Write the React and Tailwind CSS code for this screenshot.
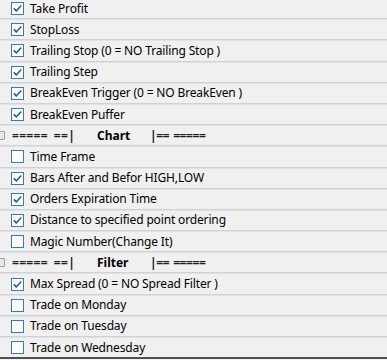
import React from "react";

const items = [
  { t: "Take Profit", c: true },
  { t: "StopLoss", c: true },
  { t: "Trailing Stop (0 = NO Trailing Stop )", c: true },
  { t: "Trailing Step", c: true },
  { t: "BreakEven Trigger (0 = NO BreakEven )", c: true },
  { t: "BreakEven Puffer", c: true },
  { h: "Chart" },
  { t: "Time Frame", c: false },
  { t: "Bars After and Befor HIGH,LOW", c: true },
  { t: "Orders Expiration Time", c: true },
  { t: "Distance to specified point ordering", c: true },
  { t: "Magic Number(Change It)", c: false },
  { h: "Filter" },
  { t: "Max Spread (0 = NO Spread Filter )", c: true },
  { t: "Trade on Monday", c: false },
  { t: "Trade on Tuesday", c: false },
  { t: "Trade on Wednesday", c: false },
];

function Box({ checked }) {
  return (
    <div className="w-[13px] h-[13px] border border-[#3b79b3] bg-white flex items-center justify-center shrink-0">
      {checked && (
        <svg width="11" height="11" viewBox="0 0 11 11">
          <path d="M1.8 5.4 L4.3 7.9 L9.2 2.6" fill="none" stroke="#1b5790" strokeWidth="1.5" />
        </svg>
      )}
    </div>
  );
}

function Row({ it }) {
  return (
    <div className="h-[21.2px] flex flex-col shrink-0">
      <div className="flex-1 flex items-center relative">
        {it.h ? (
          <>
            <div className="absolute left-[-4px] top-[5px] w-[9px] h-[9px] border border-[#a0a0a0] bg-[#e8e8e8] rounded-[1px]" />
            <div className="ml-[12px] w-[85px] flex font-bold text-[#202020] tracking-[0.3px]">
              <span>=====</span>
              <span className="ml-[6px]">==|</span>
            </div>
            <span className="w-[53px] font-bold">{it.h}</span>
            <div className="flex font-bold text-[#202020] tracking-[-0.4px]">
              <span>|==</span>
              <span className="ml-[4px]">=====</span>
            </div>
          </>
        ) : (
          <>
            <div className="ml-[11px]">
              <Box checked={it.c} />
            </div>
            <span className="ml-[6px] whitespace-nowrap tracking-[-0.15px]">{it.t}</span>
          </>
        )}
      </div>
      <div className="h-px bg-[#d2d2d2]" />
      <div className="h-[1px] bg-[#e2e2e2]" />
    </div>
  );
}

export default function App() {
  return (
    <div className="w-[387px] h-[360px] bg-[#f0f0f0] overflow-hidden text-[12px] text-black" style={{ fontFamily: '"Noto Sans", "Open Sans", sans-serif' }}>
      <div className="h-[357px] overflow-hidden">
        <div className="flex flex-col -mt-[1px]">
          {items.map((it, i) => (
            <Row key={i} it={it} />
          ))}
        </div>
      </div>
      <div className="h-[2px] bg-[#505050]" />
    </div>
  );
}
